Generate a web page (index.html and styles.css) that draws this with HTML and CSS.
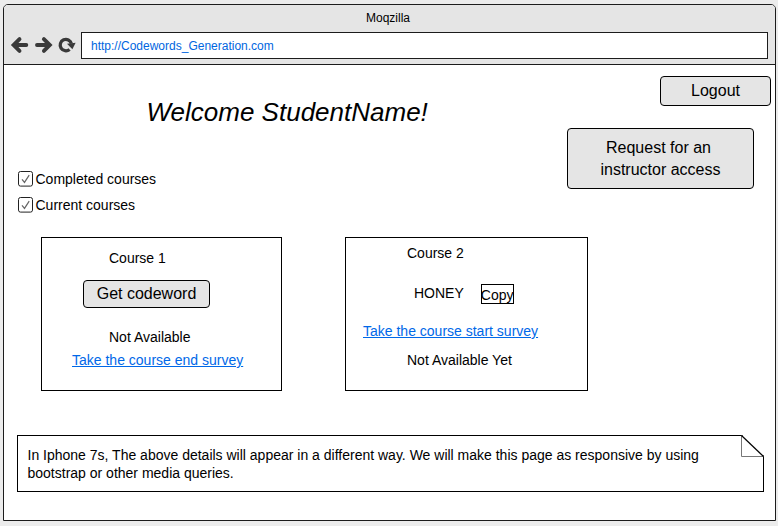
FILE: index.html
```html
<!DOCTYPE html>
<html lang="en">
<head>
<meta charset="utf-8">
<title>Codewords Generation</title>
<link rel="stylesheet" href="styles.css">
</head>
<body>
<div class="browser">
  <header class="chrome">
    <div class="title">Moqzilla</div>
    <div class="toolbar">
      <svg class="nav" width="66" height="20" viewBox="0 0 66 20" fill="none" stroke="#3a3a3a" stroke-width="3.9">
        <path d="M4.5 10H16.3M9.5 4.1L3.6 10L9.5 15.9" stroke-linecap="round"/>
        <path d="M27 10H38.8M33.9 4.1L39.8 10L33.9 15.9" stroke-linecap="round"/>
        <path d="M59.6 14.4A5.7 5.7 0 1 1 61.4 8.6" stroke-width="3.3"/>
        <path d="M57 8.8L65.6 7.8L62.4 14.2Z" fill="#3a3a3a" stroke="none"/>
      </svg>
      <div class="address">http://Codewords_Generation.com</div>
    </div>
  </header>
  <main class="page">
    <div class="intro">
      <div class="welcome">
        <h1><span>Welcome StudentName!</span></h1>
        <label class="check"><svg width="15" height="16" viewBox="0 0 15 16" fill="none"><rect x=".5" y=".5" width="14" height="14.6" rx="2" stroke="#222"/><path d="M4 8.3L6.5 11.4L11.2 4.2" stroke="#666" stroke-width="1.2"/></svg><span class="completed">Completed courses</span></label>
        <label class="check"><svg width="15" height="16" viewBox="0 0 15 16" fill="none"><rect x=".5" y=".5" width="14" height="14.6" rx="2" stroke="#222"/><path d="M4 8.3L6.5 11.4L11.2 4.2" stroke="#666" stroke-width="1.2"/></svg><span class="current">Current courses</span></label>
      </div>
      <div class="actions">
        <button class="btn logout">Logout</button>
        <button class="btn request"><span class="line">Request for an</span><br>instructor access</button>
      </div>
    </div>
    <div class="courses">
      <section class="card first">
        <p class="name">Course 1</p>
        <button class="btn get">Get codeword</button>
        <p class="status">Not Available</p>
        <a class="link">Take the course end survey</a>
      </section>
      <section class="card second">
        <p class="name">Course 2</p>
        <div class="code"><span class="word">HONEY</span><span class="copy">Copy</span></div>
        <a class="link">Take the course start survey</a>
        <p class="status">Not Available Yet</p>
      </section>
    </div>
    <aside class="note">
      <svg class="fold" width="23" height="22" viewBox="0 0 23 22"><path d="M1 0H23V21Z" fill="#fff"/><path d="M.5 .5V21.5H22.5" fill="none" stroke="#777"/><path d="M.5 .5L22.5 21.5" stroke="#000" stroke-width="1.2"/></svg>
      <p>In Iphone 7s, The above details will appear in a different way. We will make this page as responsive by using</p>
      <p>bootstrap or other media queries.</p>
    </aside>
  </main>
</div>
</body>
</html>
```
FILE: styles.css
```css
* { box-sizing: border-box; }
body {
  margin: 0;
  padding: 4px 2px 5px 3px;
  height: 526px;
  background: #ececec;
  color: #000;
  font: 14px/18px "Liberation Sans", Arial, sans-serif;
  overflow: hidden;
}
h1, p { margin: 0; }
p, a, span, .title, .address { white-space: nowrap; }
.browser {
  width: 773px;
  height: 517px;
  border: 1px solid #1c1c1c;
  border-radius: 5px 5px 0 0;
  background: #fff;
  overflow: hidden;
}
.chrome {
  height: 60px;
  background: #e5e5e5;
  border-bottom: 1px solid #1c1c1c;
}
.title {
  height: 27px;
  padding-top: 4px;
  padding-right: 3px;
  font-size: 12px;
  line-height: 18px;
  text-align: center;
}
.toolbar { display: flex; padding-left: 6px; }
.nav { margin: 3px 5px 0 0; overflow: visible; }
.address {
  width: 687px;
  height: 27px;
  padding-left: 9px;
  border: 1px solid #1c1c1c;
  background: #fff;
  color: #0066e0;
  font-size: 12px;
  line-height: 26px;
}
.intro { display: flex; justify-content: space-between; height: 172px; }
.welcome { padding-left: 14px; }
h1 {
  margin: 31px 0 43px 128.5px;
  font-size: 26px;
  line-height: 32px;
  font-style: italic;
  font-weight: 400;
}
.check { display: flex; align-items: center; height: 16px; margin-bottom: 10px; gap: 2.5px; }
.check svg { display: block; }
.actions { display: flex; flex-direction: column; align-items: flex-end; padding: 11px 4px 0 0; }
.btn {
  padding: 0;
  border: 1px solid #000;
  border-radius: 4px;
  background: #e5e5e5;
  color: #000;
  font: 16px/22px "Liberation Sans", Arial, sans-serif;
  white-space: nowrap;
}
.logout { width: 111px; height: 30px; }
.request { width: 187px; height: 61px; margin: 22px 17px 0 0; }
.line { padding-right: 4px; }
.courses { display: flex; gap: 63px; margin-left: 37px; }
.card { height: 154px; border: 1px solid #000; display: flex; flex-direction: column; align-items: flex-start; }
.first { width: 241px; padding-top: 11px; }
.first .name, .first .status { margin-left: 67px; }
.get { width: 127px; height: 28px; margin: 13px 0 20px 41px; }
.first .link { margin: 5px 0 0 30px; }
.second { width: 243px; padding-top: 6px; }
.second .name, .second .status { margin-left: 61px; }
.code { display: flex; margin: 22px 0 18px 68px; gap: 17px; height: 20px; }
.copy { width: 33px; height: 20px; border: 1px solid #000; line-height: 20px; text-indent: -1px; }
.link { color: #0068e8; text-decoration: underline; }
.second .link { margin-left: 17px; }
.second .status { margin-top: 11px; }
.note {
  position: relative;
  width: 747px;
  height: 57px;
  margin: 44px 0 0 13px;
  padding: 10px 0 0 9.5px;
  border: 1px solid #000;
}
.fold { position: absolute; top: -1px; right: -1px; }
```
